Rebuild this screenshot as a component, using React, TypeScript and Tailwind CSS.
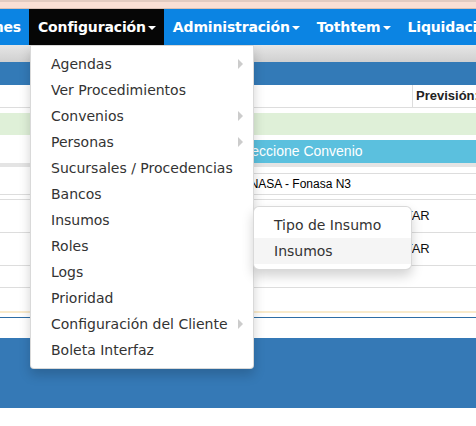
import React from 'react';

/* ─── Static data ─────────────────────────────────────────────── */

const NAV_ITEMS = ['Administración', 'Tothtem'];

const MENU: { label: string; sub?: boolean }[] = [
  { label: 'Agendas', sub: true },
  { label: 'Ver Procedimientos' },
  { label: 'Convenios', sub: true },
  { label: 'Personas', sub: true },
  { label: 'Sucursales / Procedencias' },
  { label: 'Bancos' },
  { label: 'Insumos' },
  { label: 'Roles' },
  { label: 'Logs' },
  { label: 'Prioridad' },
  { label: 'Configuración del Cliente', sub: true },
  { label: 'Boleta Interfaz' },
];

const SUBMENU = ['Tipo de Insumo', 'Insumos'];

/* ─── Pieces ─────────────────────────────────────────────────── */

function Caret() {
  return (
    <span className="ml-[2px] mt-[2px] w-0 h-0 border-x-[4px] border-x-transparent border-t-[4px] border-t-white" />
  );
}

function NavItem({ label, active }: { label: string; active?: boolean }) {
  return (
    <div className={`flex items-center pl-[9px] pr-[8px] ${active ? 'bg-[#060606]' : ''}`}>
      <span>{label}</span>
      <Caret />
    </div>
  );
}

/* ─── Component ──────────────────────────────────────────────── */

export default function App() {
  return (
    <div className="relative w-[476px] h-[426px] overflow-hidden bg-white font-['Liberation_Sans',Arial,sans-serif]">
      {/* browser strip */}
      <div className="h-[2px] bg-[#e2cbc1]" />
      <div className="h-[6px] bg-[#f9dfd5]" />
      <div className="h-[1px] bg-[#d9c0b6]" />

      {/* Navbar */}
      <div className="h-[36px] bg-[#0b84e3] flex text-white font-bold text-[14px] tracking-[-0.15px] font-['DejaVu_Sans',Verdana,sans-serif] whitespace-nowrap">
        <div className="w-[29px] shrink-0 overflow-hidden flex items-center justify-end pr-[8px]">
          <span>Atenciones</span>
        </div>
        <NavItem label="Configuración" active />
        {NAV_ITEMS.map((n) => (
          <NavItem key={n} label={n} />
        ))}
        <div className="flex items-center pl-[9px]">
          <span>Liquidaciones</span>
        </div>
      </div>

      {/* Page content behind the menu */}
      <div className="h-[17px] bg-gradient-to-b from-[#e6e6e6] to-[#d0d0d0]" />
      <div className="h-[23px] bg-[#337ab7]" />
      <div className="h-[23px] flex border-b border-[#dddddd]">
        <div className="flex-1" />
        <div className="w-[64px] border-l border-[#dddddd] flex items-center pl-[3px] text-[13px] font-bold text-[#222] whitespace-nowrap">
          Previsión:
        </div>
      </div>
      <div className="h-[5px]" />
      <div className="h-[22px] bg-[#dff0d8]" />
      <div className="h-[5px]" />
      <div className="h-[23px] flex">
        <div className="w-[215px]" />
        <div className="flex-1 bg-[#5bc0de] flex items-center pl-[16px] text-[14px] text-white whitespace-nowrap">
          Seleccione Convenio
        </div>
      </div>
      <div className="h-[4px] bg-[#e4e4e4]" />
      <div className="h-[7px] flex">
        <div className="w-[215px]" />
        <div className="flex-1 border-b border-[#dddddd]" />
      </div>
      <div className="h-[21px] flex border-b border-[#dddddd]">
        <div className="w-[233px]" />
        <div className="flex items-center text-[12px] text-black whitespace-nowrap">FONASA - Fonasa N3</div>
      </div>
      <div className="h-[5px] border-b border-[#dddddd]" />
      <div className="h-[33px] flex border-b border-[#dddddd]">
        <div className="w-[383px]" />
        <div className="flex items-center text-[13px] text-[#111]">EDITAR</div>
      </div>
      <div className="h-[33px] flex border-b border-[#dddddd]">
        <div className="w-[383px]" />
        <div className="flex items-center text-[13px] text-[#111]">EDITAR</div>
      </div>
      <div className="h-[22px] border-b border-[#dddddd]" />
      <div className="h-[25px] border-b-2 border-[#faebcc]" />
      <div className="h-[5px] border-b border-[#2e6da4]" />
      <div className="h-[20px]" />
      <div className="h-[70px] bg-[#3579b6]" />

      {/* Dropdown menu */}
      <div className="absolute left-[30px] top-[45px] w-[224px] bg-white border border-black/15 rounded-b-[4px] py-[5px] shadow-[0_6px_12px_rgba(0,0,0,0.175)] font-['DejaVu_Sans',Verdana,sans-serif] text-[14px] text-[#333333]">
        {MENU.map((m) => (
          <div key={m.label} className="flex items-center justify-between px-[20px] py-[3px] leading-[20px] whitespace-nowrap">
            <span>{m.label}</span>
            {m.sub && (
              <span className="-mr-[10px] w-0 h-0 border-y-[5px] border-y-transparent border-l-[5px] border-l-[#cccccc]" />
            )}
          </div>
        ))}
      </div>

      {/* Submenu */}
      <div className="absolute left-[253px] top-[206px] w-[159px] bg-white border border-black/15 rounded-[6px] py-[5px] shadow-[0_6px_12px_rgba(0,0,0,0.175)] font-['DejaVu_Sans',Verdana,sans-serif] text-[14px] text-[#333333]">
        {SUBMENU.map((s, i) => (
          <div key={s} className={`px-[20px] py-[3px] leading-[20px] whitespace-nowrap ${i === 1 ? 'bg-[#f5f5f5]' : ''}`}>
            {s}
          </div>
        ))}
      </div>
    </div>
  );
}
